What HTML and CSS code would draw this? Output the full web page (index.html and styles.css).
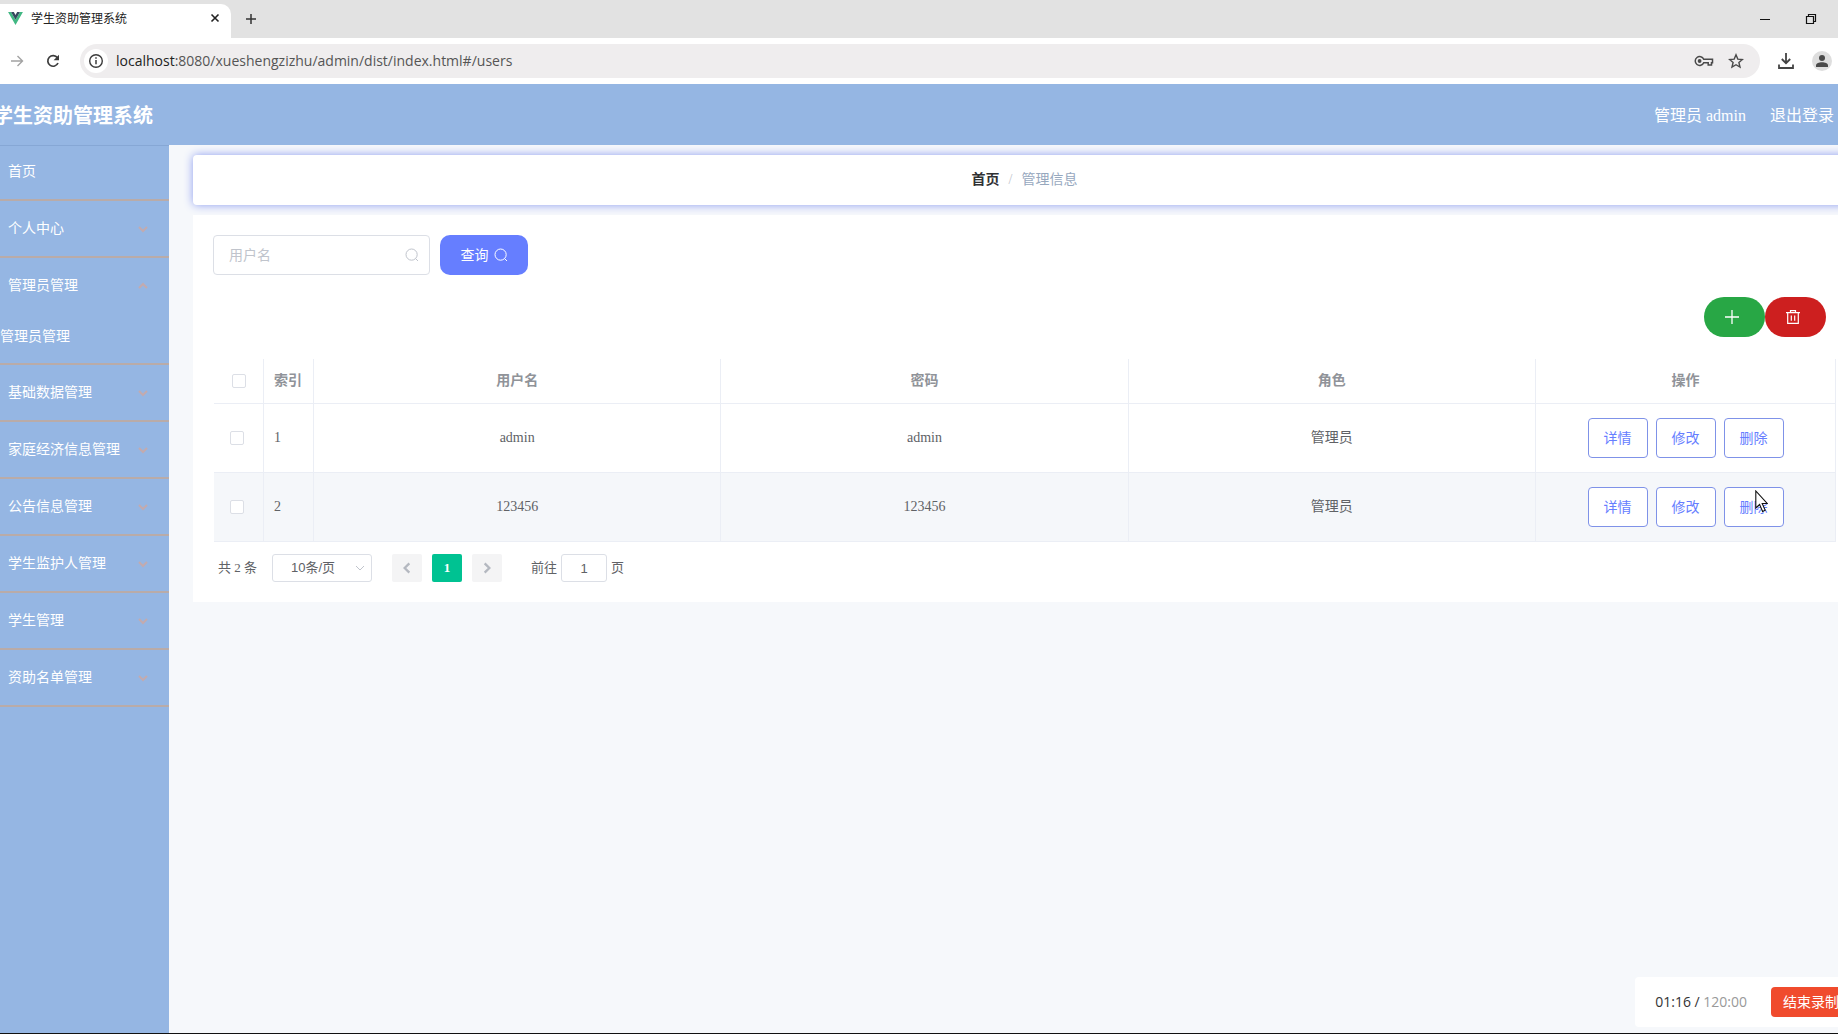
FILE: index.html
```html
<!DOCTYPE html>
<html lang="zh-CN">
<head>
<meta charset="utf-8">
<title>学生资助管理系统</title>
<link rel="stylesheet" href="styles.css">
</head>
<body>
<svg class="sprite" aria-hidden="true">
  <symbol id="chevron" viewBox="0 0 12 12"><path d="M2 4l4 4 4-4" fill="none" stroke="currentColor"/></symbol>
  <symbol id="search" viewBox="0 0 14 14"><circle cx="6.6" cy="6.6" r="5.6" fill="none" stroke="currentColor"/><path d="M10.6 10.6l2.4 2.4" stroke="currentColor"/></symbol>
</svg>

<div class="tabs">
  <div class="tab">
    <svg class="favicon" viewBox="0 0 16 14"><path d="M0 0h3.2L8 8.3 12.8 0H16L8 14z" fill="#41b883"/><path d="M3.2 0h3L8 3.2 9.8 0h3L8 8.3z" fill="#34495e"/></svg>
    <span class="tab-title">学生资助管理系统</span>
    <button class="icon-btn" aria-label="关闭标签页"><svg width="10" height="10" viewBox="0 0 10 10"><path d="M1.5 1.5l7 7m0-7l-7 7" stroke="#222" stroke-width="1.6"/></svg></button>
  </div>
  <button class="icon-btn new-tab" aria-label="新标签页"><svg width="12" height="12" viewBox="0 0 12 12"><path d="M6 1v10M1 6h10" stroke="#333" stroke-width="1.5"/></svg></button>
  <div class="window-controls">
    <button class="icon-btn" aria-label="最小化"><svg width="12" height="12" viewBox="0 0 12 12"><path d="M1 6.5h10" stroke="#111"/></svg></button>
    <button class="icon-btn" aria-label="还原"><svg width="12" height="12" viewBox="0 0 12 12"><path d="M1.5 3.5h7v7h-7zM3.5 3.5v-2h7v7h-2" fill="none" stroke="#111" stroke-width="1.2"/></svg></button>
  </div>
</div>

<div class="toolbar">
  <button class="icon-btn" aria-label="前进"><svg width="14" height="14" viewBox="0 0 14 14"><path d="M1 7h11M7.500 2l5 5-5 5" fill="none" stroke="#a3a3a3" stroke-width="1.4"/></svg></button>
  <button class="icon-btn reload" aria-label="刷新"><svg width="14" height="14" viewBox="0 0 14 14"><path d="M12 9a5.300 5.300 0 1 1-.6-5.200" fill="none" stroke="#3c3c3c" stroke-width="1.700"/><path d="M13 .8v5.400H7.600z" fill="#3c3c3c"/></svg></button>
  <div class="address">
    <span class="site-info"><svg width="16" height="16" viewBox="0 0 16 16"><circle cx="8" cy="8" r="6.300" fill="none" stroke="#3c3c3c" stroke-width="1.400"/><path d="M8 7v4.300M8 4.300v1.500" stroke="#3c3c3c" stroke-width="1.500"/></svg></span>
    <span class="url"><b>localhost</b>:8080/xueshengzizhu/admin/dist/index.html#/users</span>
    <button class="icon-btn" aria-label="密码"><svg width="20" height="12" viewBox="0 0 20 12"><path d="M9.700 4.300h8.800v3.400h-1v2.200h-3.300V7.700H9.700A4.400 4.400 0 1 1 9.700 4.300z" fill="none" stroke="#4a4a4a" stroke-width="1.500"/><circle cx="5.600" cy="6" r="1.900" fill="#4a4a4a"/></svg></button>
    <button class="icon-btn" aria-label="收藏"><svg width="16" height="16" viewBox="0 0 16 16"><path d="M8 1.800l1.800 4.300 4.600.4-3.500 3 1.100 4.600L8 11.700l-4 2.400 1.100-4.600-3.500-3 4.600-.4z" fill="none" stroke="#4a4a4a" stroke-width="1.400"/></svg></button>
  </div>
  <button class="icon-btn" aria-label="下载"><svg width="18" height="18" viewBox="0 0 18 18"><path d="M9 1v10M4.800 7L9 11.200 13.200 7M2 12.500V16h14v-3.500" fill="none" stroke="#444" stroke-width="1.800"/></svg></button>
  <button class="icon-btn" aria-label="个人资料"><svg width="20" height="20" viewBox="0 0 20 20"><circle cx="10" cy="10" r="10" fill="#dedede"/><circle cx="10" cy="7" r="3" fill="#4a4a4a"/><path d="M4 16v-1.500c0-2 3-3.200 6-3.200s6 1.200 6 3.200V16z" fill="#4a4a4a"/></svg></button>
</div>

<header class="app-header">
  <h1>学生资助管理系统</h1>
  <span>管理员 admin</span>
  <a href="#logout">退出登录</a>
</header>

<div class="app-body">
  <nav class="sidebar">
    <ul>
      <li><a class="home" href="#home">首页</a></li>
      <li><a href="#center">个人中心<svg class="arrow"><use href="#chevron"/></svg></a></li>
      <li><a href="#admins">管理员管理<svg class="arrow up"><use href="#chevron"/></svg></a>
        <a class="sub" href="#users">管理员管理</a></li>
      <li><a href="#base">基础数据管理<svg class="arrow"><use href="#chevron"/></svg></a></li>
      <li><a href="#family">家庭经济信息管理<svg class="arrow"><use href="#chevron"/></svg></a></li>
      <li><a href="#notice">公告信息管理<svg class="arrow"><use href="#chevron"/></svg></a></li>
      <li><a href="#guardian">学生监护人管理<svg class="arrow"><use href="#chevron"/></svg></a></li>
      <li><a href="#student">学生管理<svg class="arrow"><use href="#chevron"/></svg></a></li>
      <li><a href="#aid">资助名单管理<svg class="arrow"><use href="#chevron"/></svg></a></li>
    </ul>
  </nav>

  <main class="main">
    <div class="breadcrumb"><a href="#home">首页</a><span class="sep">/</span><span>管理信息</span></div>
    <section class="card">
      <form class="search-row">
        <label class="search-box">
          <input type="text" placeholder="用户名" aria-label="用户名">
          <svg class="glass"><use href="#search"/></svg>
        </label>
        <button type="button" class="query">查询<svg class="glass"><use href="#search"/></svg></button>
      </form>
      <div class="actions">
        <button class="round add" aria-label="新增"><svg width="14" height="14" viewBox="0 0 14 14"><path d="M7 0v14M0 7h14" stroke="#fff" stroke-width="1.300"/></svg></button>
        <button class="round remove" aria-label="删除"><svg width="14" height="14" viewBox="0 0 14 14"><path d="M0 2.700h14M4.500 2.500V.6h5v1.900M1.700 3v10.400h10.600V3M5.300 5.500v5.300M8.700 5.500v5.300" fill="none" stroke="#fff" stroke-width="1.200"/></svg></button>
      </div>
      <table>
        <colgroup><col class="c-narrow"><col class="c-narrow"><col><col><col><col class="c-ops"></colgroup>
        <thead>
          <tr><th><input type="checkbox" aria-label="全选"></th><th class="idx">索引</th><th>用户名</th><th>密码</th><th>角色</th><th>操作</th></tr>
        </thead>
        <tbody>
          <tr>
            <td class="check"><input type="checkbox" aria-label="选择第1行"></td><td class="idx">1</td><td>admin</td><td>admin</td><td>管理员</td>
            <td><div class="ops"><button>详情</button><button>修改</button><button>删除</button></div></td>
          </tr>
          <tr class="hover">
            <td class="check"><input type="checkbox" aria-label="选择第2行"></td><td class="idx">2</td><td>123456</td><td>123456</td><td>管理员</td>
            <td><div class="ops"><button>详情</button><button>修改</button><button class="pointed">删除<svg class="cursor" viewBox="0 0 13 23"><path d="M.8 1v17l3.800-3.500 3 7 2.600-1.200-3-6.800h5z" fill="#fff" stroke="#111" stroke-width="1.100"/></svg></button></div></td>
          </tr>
        </tbody>
      </table>
      <div class="pagination">
        <span class="total">共 2 条</span>
        <span class="size"><select aria-label="每页条数"><option>10条/页</option></select><svg class="arrow"><use href="#chevron"/></svg></span>
        <div class="pager">
          <button disabled aria-label="上一页"><svg class="prev"><use href="#chevron"/></svg></button>
          <button class="current">1</button>
          <button disabled aria-label="下一页"><svg class="next"><use href="#chevron"/></svg></button>
        </div>
        <label class="jump">前往<input type="text" value="1">页</label>
      </div>
    </section>
  </main>
</div>

<div class="recorder">
  <span class="time">01:16 / <span>120:00</span></span>
  <button>结束录制</button>
</div>
</body>
</html>
```
FILE: styles.css
```css
* { box-sizing: border-box; }

body {
  margin: 0;
  min-height: 100vh;
  display: flex;
  flex-direction: column;
  overflow: hidden;
  background: #f6f8fb;
  border-bottom: 1px solid #111;
  color: #606266;
  font: 14px/20px "Liberation Serif", "Noto Sans CJK SC", serif;
}

button, input, select { font: 14px/20px "Liberation Sans", "Noto Sans CJK SC", sans-serif; }
button { cursor: pointer; }
a { color: inherit; text-decoration: none; }
svg { display: block; flex: none; }
.sprite { position: absolute; width: 0; height: 0; }

.icon-btn {
  display: flex;
  padding: 0;
  border: 0;
  background: none;
}

/* Browser tabs */
.tabs {
  display: flex;
  align-items: center;
  height: 38px;
  background: #e2e2e2;
}
.tab {
  align-self: flex-end;
  display: flex;
  align-items: center;
  gap: 8px;
  width: 231px;
  height: 34px;
  padding: 0 11px 6px 8px;
  border-radius: 0 10px 0 0;
  background: #fff;
}
.favicon { width: 15px; height: 13px; }
.tab-title {
  flex: 1;
  color: #222;
  font: 12px/20px "Noto Sans CJK SC", sans-serif;
}
.new-tab { margin-left: 14px; }
.window-controls {
  display: flex;
  gap: 34px;
  margin-left: auto;
  padding-right: 21px;
}

/* Browser toolbar */
.toolbar {
  display: flex;
  align-items: center;
  gap: 17px;
  height: 46px;
  padding: 0 6px 0 10px;
  background: #fff;
}
.reload { margin-left: 5px; }
.address {
  flex: 1;
  display: flex;
  align-items: center;
  gap: 14px;
  height: 34px;
  margin-left: 3px;
  padding: 0 16px 0 4px;
  border-radius: 17px;
  background: #efedee;
}
.site-info {
  display: flex;
  align-items: center;
  justify-content: center;
  width: 24px;
  height: 24px;
  border-radius: 12px;
  background: #fff;
}
.url {
  flex: 1;
  margin-left: -6px;
  color: #555;
  font: 14px/20px "Open Sans", sans-serif;
}
.url b { color: #222; font-weight: 400; }

/* Application header */
.app-header {
  display: flex;
  align-items: center;
  gap: 24px;
  height: 61px;
  padding: 2px 4px 0 0;
  background: #95b6e3;
  color: #fff;
  font-size: 16px;
}
.app-header h1 {
  flex: 1;
  margin: 0 0 0 -7px;
  font-size: 20px;
}

.app-body {
  flex: 1;
  display: flex;
}

/* Side menu */
.sidebar {
  flex: none;
  width: 169px;
  background: #95b6e3;
  box-shadow: inset 0 1px #86a7d5;
  color: #fff;
}
.sidebar ul { margin: 0; padding: 0; list-style: none; }
.sidebar li { border-bottom: 2px solid #b9aba8; }
.sidebar a {
  display: flex;
  align-items: center;
  justify-content: space-between;
  height: 55px;
  padding: 0 20px 0 8px;
}
.sidebar .home { height: 54px; }
.sidebar .sub { height: 50px; padding: 0 0 2px; }
.sidebar .arrow { stroke-width: 2px; }
.arrow { width: 12px; height: 12px; color: #c3aaae; }
.up { transform: rotate(180deg); }

/* Main area runs past the right edge of the window */
.main {
  flex: 1;
  margin-right: -18px;
  padding: 10px 0 0 24px;
}
.breadcrumb {
  display: flex;
  align-items: center;
  justify-content: center;
  gap: 9px;
  height: 50px;
  border-radius: 4px;
  background: #fff;
  box-shadow: 0 0 10px #8c9cf0;
  color: #97a8be;
}
.breadcrumb a { color: #303133; font-weight: 700; }
.sep { color: #c0c4cc; }

.card {
  margin-top: 10px;
  padding: 20px;
  background: #fff;
  position: relative;
}

.search-row { display: flex; gap: 10px; }
.search-box {
  display: flex;
  align-items: center;
  width: 217px;
  height: 40px;
  padding: 0 10px 0 15px;
  border: 1px solid #dcdfe6;
  border-radius: 4px;
  color: #c0c4cc;
}
.search-box input {
  flex: 1;
  min-width: 0;
  padding: 0;
  border: 0;
  outline: 0;
  background: none;
}
.search-box input::placeholder { color: #c0c4cc; }
.glass { width: 14px; height: 14px; }
.query {
  display: flex;
  align-items: center;
  justify-content: center;
  gap: 5px;
  width: 88px;
  height: 40px;
  padding: 0;
  border: 0;
  border-radius: 10px;
  background: #667eff;
  color: #fff;
}

.actions {
  display: flex;
  justify-content: flex-end;
  margin-top: 22px;
  padding-right: 10px;
}
.round {
  display: flex;
  align-items: center;
  justify-content: center;
  width: 61px;
  height: 40px;
  padding: 0 5px 0 0;
  border: 0;
  border-radius: 20px;
}
.add { background: #28a745; }
.remove { background: #cd1f1f; }

/* Data table */
table {
  width: 100%;
  margin-top: 22px;
  border-left: 1px solid #fff;
  border-collapse: separate;
  border-spacing: 0;
  table-layout: fixed;
}
.c-narrow { width: 50px; }
.c-ops { width: 300px; }
th, td {
  padding: 0;
  border-right: 1px solid #ebeef5;
  border-bottom: 1px solid #ebeef5;
  text-align: center;
}
th { height: 45px; color: #909399; }
td { height: 69px; }
.idx { padding-left: 10px; text-align: left; }
.hover { background: #f5f7fa; }
th input, td input {
  appearance: none;
  display: block;
  width: 14px;
  height: 14px;
  margin: 0 auto;
  border: 1px solid #dcdfe6;
  border-radius: 2px;
  background: #fff;
}
.check { padding-right: 4px; }
.ops {
  display: flex;
  justify-content: center;
  gap: 8px;
}
.ops button {
  width: 60px;
  height: 40px;
  padding: 0;
  border: 1px solid #7f92e8;
  border-radius: 4px;
  background: #fff;
  color: #667eff;
}
.pointed { position: relative; }
.cursor {
  position: absolute;
  left: 30px;
  top: 2px;
  width: 13px;
  height: 23px;
}

/* Pagination */
.pagination {
  display: flex;
  align-items: center;
  margin-top: 12px;
  padding: 0 5px;
  font-size: 13px;
}
.pagination input, .pagination select {
  height: 28px;
  padding: 0;
  border: 1px solid #dcdfe6;
  border-radius: 3px;
  background: #fff;
  color: #606266;
  text-align: center;
  font-size: 13px;
}
.size {
  display: grid;
  align-items: center;
  margin: 0 20px 0 15px;
}
.size > * { grid-area: 1 / 1; }
.size select {
  appearance: none;
  width: 100px;
  padding-right: 18px;
}
.size .arrow {
  justify-self: end;
  margin-right: 6px;
  color: #c0c4cc;
  pointer-events: none;
}
.pager { display: flex; gap: 10px; }
.pager button {
  display: flex;
  align-items: center;
  justify-content: center;
  width: 30px;
  height: 28px;
  padding: 0;
  border: 0;
  border-radius: 2px;
  background: #f4f4f5;
  color: #b4b8c0;
}
.pager .current {
  background: #00c292;
  color: #fff;
  font: 700 13px/20px "Liberation Serif", serif;
}
.prev, .next { width: 14px; height: 14px; stroke-width: 2px; }
.prev { transform: rotate(90deg); }
.next { transform: rotate(-90deg); }
.jump {
  display: flex;
  align-items: center;
  gap: 4px;
  margin-left: 29px;
}
.jump input { width: 46px; }

/* Screen recorder */
.recorder {
  position: fixed;
  right: -20px;
  bottom: 7px;
  display: flex;
  align-items: center;
  gap: 24px;
  height: 50px;
  padding-left: 20px;
  border-radius: 4px;
  background: #fff;
}
.time { color: #333; font: 14px/20px "Open Sans", sans-serif; }
.time span { color: #999; }
.recorder button {
  height: 30px;
  width: 87px;
  padding: 0 0 0 12px;
  border: 0;
  border-radius: 4px;
  background: #f04b2d;
  color: #fff;
  text-align: left;
}
```
